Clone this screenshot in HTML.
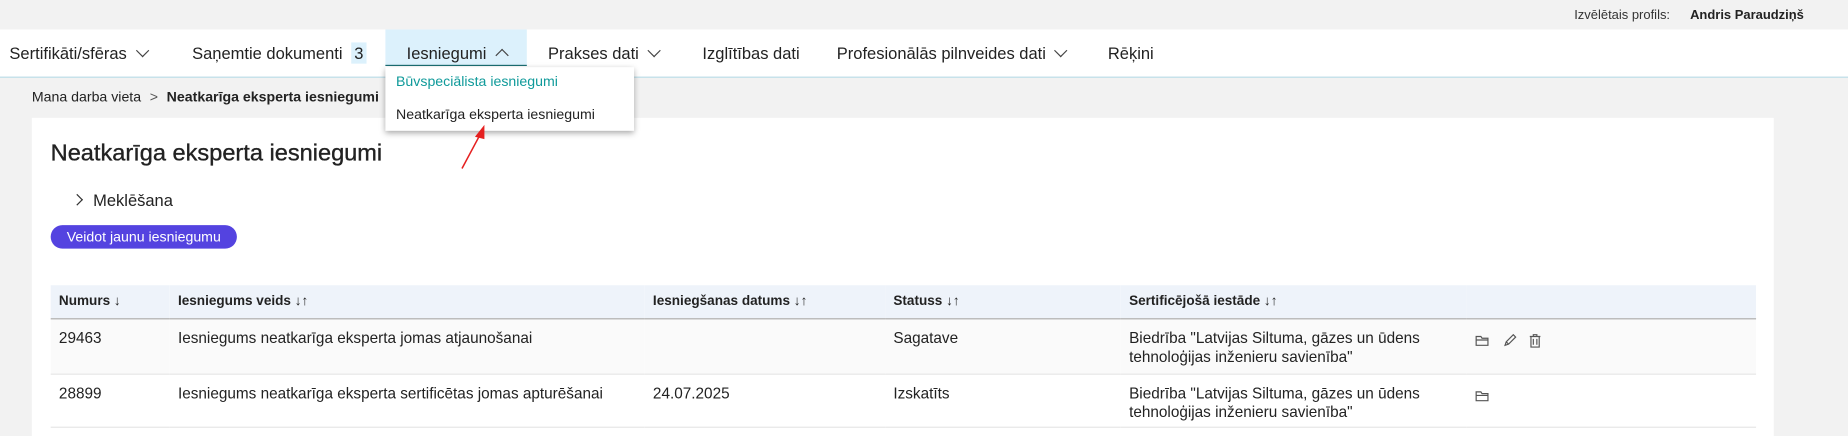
<!DOCTYPE html>
<html><head><meta charset="utf-8"><style>
html,body{margin:0;padding:0;width:1848px;height:431px;overflow:hidden;background:#f2f2f2}
#w{position:absolute;left:0;top:0;width:1568px;height:366px;transform:scale(1.17857);transform-origin:0 0;font-family:"Liberation Sans",sans-serif;color:#222;font-size:13px}
.a{position:absolute;white-space:nowrap}
.nav{top:25px;left:0;width:1568px;height:40px;background:#fff;border-bottom:1px solid #b9dbe6}
.ni{top:37px;font-size:14px;color:#222}
.chev{display:inline-block;width:7px;height:7px;border-right:1.3px solid #444;border-bottom:1.3px solid #444;transform:rotate(45deg);margin-left:9px;position:relative;top:-3px}
.up{transform:rotate(-135deg);top:1px}
th,td{text-align:left;padding:0 0 0 7px;overflow:hidden}
td{white-space:normal}
</style></head><body><div id="w">
<div class="a" style="top:0;left:0;width:1568px;height:25px;background:#f2f2f2"></div>
<div class="a" style="top:7px;right:151px;font-size:11px;color:#333">Izvēlētais profils:</div>
<div class="a" style="top:7px;left:1434px;font-size:11px;font-weight:bold;color:#222">Andris Paraudziņš</div>
<div class="a nav"></div>
<div class="a" style="top:25px;left:327px;width:120px;height:30px;background:#dcf1fc;border-bottom:1.5px solid #1b6e73"></div>
<div class="a ni" style="left:8px">Sertifikāti/sfēras<span class="chev"></span></div>
<div class="a ni" style="left:163px">Saņemtie dokumenti <span style="background:#dcf1fc;padding:1px 3px;margin-left:3px">3</span></div>
<div class="a ni" style="left:345px">Iesniegumi<span class="chev up"></span></div>
<div class="a ni" style="left:465px">Prakses dati<span class="chev"></span></div>
<div class="a ni" style="left:596px">Izglītības dati</div>
<div class="a ni" style="left:710px">Profesionālās pilnveides dati<span class="chev"></span></div>
<div class="a ni" style="left:940px">Rēķini</div>
<div class="a" style="top:75px;left:27px;font-size:12px">Mana darba vieta <span style="color:#555;margin:0 4px">&gt;</span> <b>Neatkarīga eksperta iesniegumi</b></div>
<div class="a" style="top:100px;left:27px;width:1478px;height:270px;background:#fff"></div>
<div class="a" style="top:119px;left:43px;font-size:20px;color:#222;-webkit-text-stroke:0.3px #222">Neatkarīga eksperta iesniegumi</div>
<div class="a" style="top:162px;left:62px;font-size:14px"><span style="display:inline-block;width:6px;height:6px;border-right:1.2px solid #333;border-top:1.2px solid #333;transform:rotate(45deg);margin-right:10px;position:relative;top:-2px"></span>Meklēšana</div>
<div class="a" style="top:191px;left:43px;width:158px;height:20px;border-radius:10px;background:#5443e0;color:#fff;font-size:12px;line-height:20px;text-align:center">Veidot jaunu iesniegumu</div>
<table class="a" style="top:242px;left:43px;width:1447px;border-collapse:collapse;font-size:13px;table-layout:fixed;white-space:normal">
<colgroup><col style="width:101px"><col style="width:403px"><col style="width:204px"><col style="width:200px"><col style="width:293px"><col></colgroup>
<tr style="height:28px;background:#eef3fa;font-weight:bold;font-size:11.5px;border-bottom:1px solid #aaa"><th>Numurs ↓</th><th>Iesniegums veids ↓↑</th><th>Iesniegšanas datums ↓↑</th><th>Statuss ↓↑</th><th>Sertificējošā iestāde ↓↑</th><th></th></tr>
<tr style="height:47px;background:#fafafa;border-bottom:1px solid #e6e6e6;vertical-align:top"><td style="padding-top:8px">29463</td><td style="padding-top:8px">Iesniegums neatkarīga eksperta jomas atjaunošanai</td><td></td><td style="padding-top:8px">Sagatave</td><td style="padding-top:8px;line-height:16px">Biedrība "Latvijas Siltuma, gāzes un ūdens tehnoloģijas inženieru savienība"</td><td style="padding-top:11px"><svg width="60" height="14" fill="none" stroke="#555" stroke-width="1"><path d="M1.5 3.5h4l1 1.5h5v6h-10z M1.5 6.5h10"/><path d="M26 11l1-3 6-6 2 2-6 6z M27 8l2 2"/><path d="M47 3.5h9 M50 3.5v-1.5h3v1.5 M48 3.5v9h7v-9 M50 5.5v5 M53 5.5v5"/></svg></td></tr>
<tr style="height:45px;background:#fff;border-bottom:1px solid #e6e6e6;vertical-align:top"><td style="padding-top:8px">28899</td><td style="padding-top:8px">Iesniegums neatkarīga eksperta sertificētas jomas apturēšanai</td><td style="padding-top:8px">24.07.2025</td><td style="padding-top:8px">Izskatīts</td><td style="padding-top:8px;line-height:16px">Biedrība "Latvijas Siltuma, gāzes un ūdens tehnoloģijas inženieru savienība"</td><td style="padding-top:11px"><svg width="20" height="14" fill="none" stroke="#555" stroke-width="1"><path d="M1.5 3.5h4l1 1.5h5v6h-10z M1.5 6.5h10"/></svg></td></tr>
</table>
<div class="a" style="top:57px;left:327px;width:211px;height:54px;background:#fff;box-shadow:0 2px 5px rgba(0,0,0,.35)"></div>
<div class="a" style="top:62px;left:336px;font-size:12px;color:#0f9a9a">Būvspeciālista iesniegumi</div>
<div class="a" style="top:90px;left:336px;font-size:12px;color:#222">Neatkarīga eksperta iesniegumi</div>
<svg class="a" style="top:100px;left:380px" width="40" height="50"><line x1="12" y1="43" x2="28" y2="13" stroke="#e52020" stroke-width="1.3"/><polygon points="31,6 23,16 31,18" fill="#e52020"/></svg>
</div></body></html>
